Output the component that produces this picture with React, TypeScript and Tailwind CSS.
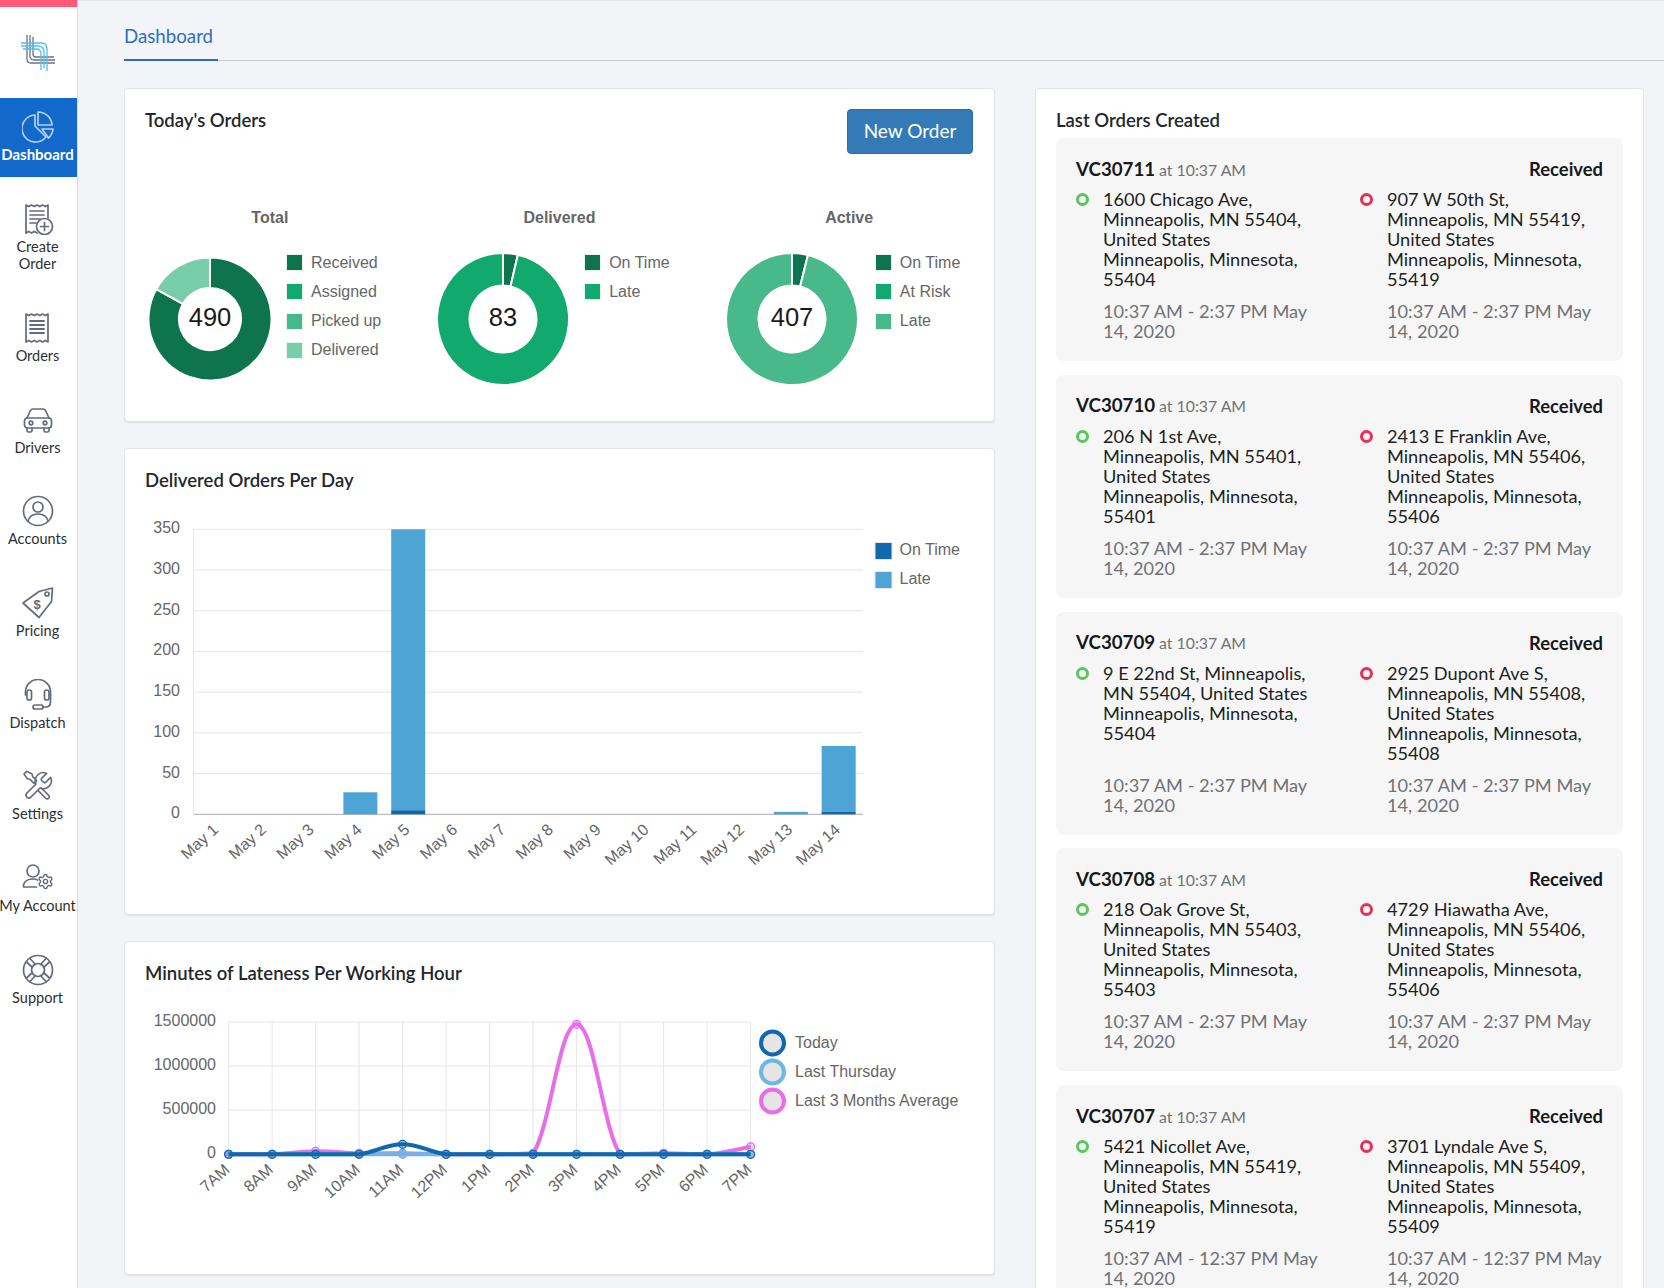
import { Settings } from 'lucide-react'
import type { ReactNode } from 'react'

const ink = '#666a7e'

function Icon({ children, stroke = ink }: { children: ReactNode; stroke?: string }) {
  return (
    <svg viewBox="0 0 32 32" className="w-8 h-8 shrink-0" fill="none" stroke={stroke} strokeWidth="1.7" strokeLinecap="round" strokeLinejoin="round">
      {children}
    </svg>
  )
}

const receipt = 'M4 30V2l2.75 1.6L9.5 2l2.75 1.6L15 2l2.75 1.6L20.5 2l2.75 1.6L26 2v'

const navItems: { label: ReactNode; active?: boolean; icon: ReactNode }[] = [
  {
    label: 'Dashboard',
    active: true,
    icon: (
      <Icon stroke="#b4d0f2">
        <path d="M13 4A13.5 13.5 0 1 0 24 26L13 15Z" />
        <path d="M16 1A14 14 0 0 1 30 14H16Z" />
        <path d="M20 18H31A14 14 0 0 1 26.5 27Z" />
      </Icon>
    ),
  },
  {
    label: (
      <>
        Create
        <br />
        Order
      </>
    ),
    icon: (
      <Icon>
        <path d="M4 30V2l2.75 1.6L9.5 2l2.75 1.6L15 2l2.75 1.6L20.5 2l2.75 1.6L26 2v13" />
        <path d="M4 30l2.75-1.6L9.5 30l2.75-1.6 2.75 1.6" />
        <path d="M8 8h14M8 12h14M8 16h10M8 20h6" />
        <circle cx="22.5" cy="23.5" r="8" />
        <path d="M22.5 19.5v8M18.5 23.5h8" />
      </Icon>
    ),
  },
  {
    label: 'Orders',
    icon: (
      <Icon>
        <path d={`${receipt}28l-2.75-1.6-2.75 1.6-2.75-1.6L15 30l-2.75-1.6L9.5 30l-2.75-1.6L4 30Z`} />
        <path d="M8 9h14M8 13h14M8 17h14M8 21h14" strokeWidth="1.8" />
      </Icon>
    ),
  },
  {
    label: 'Drivers',
    icon: (
      <Icon>
        <path d="M5 14 8 7.5Q8.8 5 11 5h10q2.2 0 3 2.5L27 14" />
        <rect x="2.5" y="14" width="27" height="10" rx="3" />
        <path d="M5 24v2.500q0 1.500 1.500 1.500h2q1.500 0 1.500-1.500V24M22 24v2.500q0 1.500 1.500 1.500h2q1.500 0 1.500-1.500V24" />
        <circle cx="9" cy="19" r="1.800" />
        <circle cx="23" cy="19" r="1.800" />
      </Icon>
    ),
  },
  {
    label: 'Accounts',
    icon: (
      <Icon>
        <circle cx="16" cy="16" r="14.500" />
        <circle cx="16" cy="12" r="5" />
        <path d="M6 26.500c1-5 5-7.500 10-7.500s9 2.500 10 7.500" />
      </Icon>
    ),
  },
  {
    label: 'Pricing',
    icon: (
      <Icon>
        <path d="M1 16 17 4.500 30.500 1l-1 13.500L17 30.500Z" />
        <circle cx="25" cy="7" r="2" />
        <text x="15" y="21.500" fontFamily="'Liberation Sans', sans-serif" fontWeight="700" fontSize="13" fill={ink} stroke="none" textAnchor="middle">$</text>
      </Icon>
    ),
  },
  {
    label: 'Dispatch',
    icon: (
      <Icon>
        <path d="M3.500 16v-3a12.500 12.500 0 0 1 25 0v3" />
        <rect x="5" y="11" width="4.500" height="10" rx="2" />
        <rect x="22.500" y="11" width="4.500" height="10" rx="2" />
        <path d="M28.500 16v7q0 5-5 5h-3" />
        <rect x="11" y="26" width="10" height="4" rx="2" />
      </Icon>
    ),
  },
  {
    label: 'Settings',
    icon: (
      <Icon>
        <g transform="scale(1.333)" strokeWidth="1.200">
          <path d="M14.700 6.300a1 1 0 0 0 0 1.400l1.600 1.600a1 1 0 0 0 1.400 0l3.770-3.770a6 6 0 0 1-7.940 7.940l-6.910 6.910a2.120 2.120 0 0 1-3-3l6.910-6.910a6 6 0 0 1 7.940-7.940l-3.760 3.760z" />
          <path d="M3.500 1 1.500 3 4 6.500l2 .5 3 3 2-2-3-3-.5-2ZM14.500 13.500l5.500 5.500q1 1 0 2.200-1.200 1-2.200 0L12.300 15.700" />
        </g>
      </Icon>
    ),
  },
  {
    label: 'My Account',
    icon: (
      <Icon>
        <circle cx="11" cy="9" r="6" />
        <path d="M14.500 25H2.500Q1 25 1.500 23q1.500-6 9.500-6 2.500 0 4.500 1" />
        <Settings x={15} y={11} width={17} height={17} stroke={ink} strokeWidth={2} />
      </Icon>
    ),
  },
  {
    label: 'Support',
    icon: (
      <Icon>
        <circle cx="16" cy="16" r="14.500" />
        <circle cx="16" cy="16" r="6.500" />
        <path d="M8 4.500l5.500 6M4.500 8l6 5.500M24 4.500l-5.500 6M27.500 8l-6 5.500M8 27.500l5.500-6M4.500 24l6-5.500M24 27.500l-5.500-6M27.500 24l-6-5.500" />
      </Icon>
    ),
  },
]

function Logo() {
  return (
    <svg viewBox="0 0 36 38" className="w-9 h-[38px]" fill="none" strokeWidth="1.300">
      <path d="M7 1v24q0 4 4 4h24M10 1v21q0 4 4 4h21M13 3v17q0 3 3 3h18" stroke="#6d7080" />
      <path d="M1 9h20q6 0 6 6v22M1 12h17q6 0 6 6v16M3 15h13q5 0 5 5v16" stroke="#52c0ec" />
    </svg>
  )
}

function Sidebar() {
  return (
    <aside className="w-[78px] shrink-0 bg-white border-r border-[#d8dae1] flex flex-col">
      <div className="h-[7px] bg-[#ff5a7c]" />
      <div className="h-[91px] flex items-center justify-center pr-[2px]">
        <Logo />
      </div>
      <nav className="flex flex-col gap-[13.200px]">
        {navItems.map((item, i) => (
          <div
            key={i}
            className={`pt-[13px] pb-[13px] pr-[2px] flex flex-col items-center text-center leading-[17.500px] whitespace-nowrap ${
              item.active ? 'bg-[#1268cb] text-white font-bold text-[15px]' : 'text-[#2c2f35] text-[14.500px]'
            }`}
          >
            {item.icon}
            <div className="mt-[3px]">{item.label}</div>
          </div>
        ))}
      </nav>
    </aside>
  )
}

function arc(cx: number, cy: number, r0: number, r1: number, from: number, to: number) {
  const pt = (r: number, deg: number) => {
    const a = ((deg - 90) * Math.PI) / 180
    return `${(cx + r * Math.cos(a)).toFixed(2)} ${(cy + r * Math.sin(a)).toFixed(2)}`
  }
  const large = to - from > 180 ? 1 : 0
  return `M${pt(r1, from)}A${r1} ${r1} 0 ${large} 1 ${pt(r1, to)}L${pt(r0, to)}A${r0} ${r0} 0 ${large} 0 ${pt(r0, from)}Z`
}

function Donut({ value, radius, inner, slices, marginLeft, legendGap, title, legend }: {
  value: string
  radius: number
  inner: number
  slices: [number, number, string][]
  marginLeft: string
  legendGap: string
  title: string
  legend: [string, string][]
}) {
  return (
    <div>
      <div className="mt-[1px] text-center font-['Liberation_Sans',sans-serif] font-bold text-[16px] leading-[20px] text-[#666]">{title}</div>
      <div className={`flex items-start mt-[23px] ${marginLeft}`}>
        <svg viewBox="0 0 136 136" className="w-[136px] h-[136px] shrink-0">
          {slices.map(([from, to, color]) => (
            <path key={from} d={arc(68, 68, inner, radius, from, to)} fill={color} stroke="#fff" strokeWidth="2" />
          ))}
          <text x="68" y="74.500" textAnchor="middle" fontFamily="'Liberation Sans', sans-serif" fontSize="25.500" fill="#1a1a1a">{value}</text>
        </svg>
        <div className={`flex flex-col gap-[12.300px] pt-[3px] ${legendGap}`}>
          {legend.map(([name, color]) => (
            <div key={name} className="flex items-center h-[17px] font-['Liberation_Sans',sans-serif] text-[16px] text-[#666] whitespace-nowrap">
              <span className="w-[17px] h-[17px] mr-[8px] border border-[#e6f4ee]" style={{ background: color }} />
              {name}
            </div>
          ))}
        </div>
      </div>
    </div>
  )
}

const axisText = { fontFamily: "'Liberation Sans', sans-serif", fontSize: 16, fill: '#666' }

function BarChart() {
  const left = 193.4
  const right = 863
  const bottom = 813.3
  const pxPerUnit = 285 / 350
  const step = (right - left) / 14
  const bars: [number, number, number][] = [
    [3, 0, 27],
    [4, 5, 345],
    [12, 0, 3],
    [13, 3, 81],
  ]
  return (
    <svg viewBox="125 500 869 400" className="block w-[869px] h-[400px] mt-[10px]">
      {[0, 50, 100, 150, 200, 250, 300, 350].map((v) => {
        const y = bottom - v * pxPerUnit
        return (
          <g key={v}>
            <line x1={left} x2={right} y1={y} y2={y} stroke={v === 0 ? '#aaa' : '#e6e6e6'} />
            <text x="180" y={y + 4} textAnchor="end" {...axisText}>{v}</text>
          </g>
        )
      })}
      <line x1={left} x2={left} y1={528} y2={bottom} stroke="#e6e6e6" />
      {bars.map(([i, onTime, late]) => {
        const x = left + i * step + 6.500
        const h1 = onTime * pxPerUnit
        const h2 = late * pxPerUnit
        return (
          <g key={i}>
            <rect x={x} y={bottom - h1 - h2} width="34" height={h2} fill="#4ea4d5" />
            <rect x={x} y={bottom - h1} width="34" height={h1} fill="#1168ae" />
          </g>
        )
      })}
      {Array.from({ length: 14 }, (_, i) => {
        const x = left + (i + 0.5) * step + 2
        return (
          <text key={i} x={x} y={830} textAnchor="end" transform={`rotate(-42 ${x} 830)`} {...axisText}>
            May {i + 1}
          </text>
        )
      })}
      <rect x="875" y="541.500" width="17" height="17" fill="#1168ae" stroke="#e3e6ea" />
      <text x="899.500" y="553.500" {...axisText}>On Time</text>
      <rect x="875" y="570.500" width="17" height="17" fill="#4ea4d5" stroke="#e3e6ea" />
      <text x="899.500" y="582.500" {...axisText}>Late</text>
    </svg>
  )
}

// same spline chart.js draws with tension 0.4
function spline(pts: [number, number][]) {
  const t = 0.4
  let d = `M${pts[0][0]} ${pts[0][1]}`
  for (let i = 0; i < pts.length - 1; i++) {
    const p0 = pts[Math.max(i - 1, 0)]
    const p1 = pts[i]
    const p2 = pts[i + 1]
    const p3 = pts[Math.min(i + 2, pts.length - 1)]
    const c1 = [p1[0] + ((p2[0] - p0[0]) * t) / 2, p1[1] + ((p2[1] - p0[1]) * t) / 2]
    const c2 = [p2[0] - ((p3[0] - p1[0]) * t) / 2, p2[1] - ((p3[1] - p1[1]) * t) / 2]
    d += `C${c1[0]} ${Math.min(c1[1], 1153.3)} ${c2[0]} ${Math.min(c2[1], 1153.3)} ${p2[0]} ${p2[1]}`
  }
  return d
}

function LineChart() {
  const left = 228.6
  const right = 750.6
  const zero = 1153.3
  const top = 1021
  const step = (right - left) / 12
  const hours = ['7AM', '8AM', '9AM', '10AM', '11AM', '12PM', '1PM', '2PM', '3PM', '4PM', '5PM', '6PM', '7PM']
  const avg = [0, 0, 3, 1, 1, 0, 0, 1, 130, 0, 1, 0, 7.500]
  const last = [0, 0, 0, 0, 0, 0, 0, 0, 0, 0, 0, 0, 0]
  const today = [0, 0, 0, 0, 10, 0, 0, 0, 0, 0, 0, 0, 0]
  const series: [number[], string][] = [
    [avg, '#e96ce9'],
    [last, '#6cb8e2'],
    [today, '#1168ae'],
  ]
  return (
    <svg viewBox="125 990 869 220" className="block w-[869px] h-[220px] mt-[7px]">
      {[0, 500000, 1000000, 1500000].map((v) => {
        const y = zero - (v / 1500000) * (zero - top)
        return (
          <g key={v}>
            <line x1={left} x2={right} y1={y} y2={y} stroke="#e6e6e6" />
            <text x="216" y={y + 4} textAnchor="end" {...axisText}>{v}</text>
          </g>
        )
      })}
      {hours.map((h, i) => {
        const x = left + i * step
        return (
          <g key={h}>
            <line x1={x} x2={x} y1={top} y2={zero} stroke="#e6e6e6" />
            <text x={x + 2} y={1170} textAnchor="end" transform={`rotate(-42 ${x + 2} 1170)`} {...axisText}>{h}</text>
          </g>
        )
      })}
      {series.map(([vals, color]) => {
        const pts = vals.map((v, i) => [left + i * step, zero - v] as [number, number])
        return (
          <g key={color}>
            <path d={spline(pts)} fill="none" stroke={color} strokeWidth="4" />
            {pts.map(([x, y]) => (
              <circle key={x} cx={x} cy={y} r="4" fill={`${color}55`} stroke={color} strokeWidth="1.200" />
            ))}
          </g>
        )
      })}
      {(
        [
          ['Today', '#1168ae', 1042],
          ['Last Thursday', '#6cb8e2', 1071],
          ['Last 3 Months Average', '#e96ce9', 1100],
        ] as [string, string, number][]
      ).map(([name, color, y]) => (
        <g key={name}>
          <circle cx="772.500" cy={y} r="11.500" fill="#e5e5e5" stroke={color} strokeWidth="4" />
          <text x="795" y={y + 5} {...axisText}>{name}</text>
        </g>
      ))}
    </svg>
  )
}

interface Stop {
  street: string
  zip: string
}

interface Order {
  id: string
  pickup: Stop
  dropoff: Stop
  window: string
}

const orders: Order[] = [
  { id: 'VC30711', pickup: { street: '1600 Chicago Ave', zip: '55404' }, dropoff: { street: '907 W 50th St', zip: '55419' }, window: '2:37 PM' },
  { id: 'VC30710', pickup: { street: '206 N 1st Ave', zip: '55401' }, dropoff: { street: '2413 E Franklin Ave', zip: '55406' }, window: '2:37 PM' },
  { id: 'VC30709', pickup: { street: '9 E 22nd St', zip: '55404' }, dropoff: { street: '2925 Dupont Ave S', zip: '55408' }, window: '2:37 PM' },
  { id: 'VC30708', pickup: { street: '218 Oak Grove St', zip: '55403' }, dropoff: { street: '4729 Hiawatha Ave', zip: '55406' }, window: '2:37 PM' },
  { id: 'VC30707', pickup: { street: '5421 Nicollet Ave', zip: '55419' }, dropoff: { street: '3701 Lyndale Ave S', zip: '55409' }, window: '12:37 PM' },
]

function StopColumn({ stop, window, ring }: { stop: Stop; window: string; ring: string }) {
  return (
    <div className="flex">
      <span className={`w-[13px] h-[13px] mt-[4px] rounded-full border-[3px] shrink-0 ${ring}`} />
      <div className="ml-[14px] w-[217px] flex flex-col">
        <div className="text-[#1d1f22]">
          {stop.street}, Minneapolis, MN {stop.zip}, United States
          <br />
          Minneapolis, Minnesota, {stop.zip}
        </div>
        <div className="mt-auto pt-[12px] text-[#6f7275]">10:37 AM - {window} May 14, 2020</div>
      </div>
    </div>
  )
}

function OrderCard({ order }: { order: Order }) {
  return (
    <div className="bg-[#f6f6f7] rounded-[8px] px-[20px] pt-[20px] pb-[18px] min-h-[223px]">
      <div className="flex justify-between items-center h-[22px] mb-[9px]">
        <div>
          <span className="font-bold text-[#17181a] text-[18.700px]">{order.id}</span>
          <span className="text-[15.800px] text-[#6f7275] ml-[4px]">at 10:37 AM</span>
        </div>
        <span className="font-bold text-[#17181a] text-[18.400px]">Received</span>
      </div>
      <div className="grid grid-cols-[284px_1fr]">
        <StopColumn stop={order.pickup} window={order.window} ring="border-[#5cc45c]" />
        <StopColumn stop={order.dropoff} window={order.window} ring="border-[#ea2e58]" />
      </div>
    </div>
  )
}

const cardClass = 'bg-white border border-[#e2e4e9] rounded-[4px] shadow-[0_1px_1px_rgba(0,0,0,0.08)]'
const titleClass = 'text-[18.500px] leading-[22px] font-semibold text-[#24272b]'

export default function App() {
  return (
    <div className="flex h-[1288px] overflow-hidden bg-[#f2f4f8] font-['Lato',sans-serif]">
      <Sidebar />
      <main className="flex-1 min-w-0 pl-[46px] border-t border-[#e3e5ea]">
        <div className="h-[60px] border-b border-[#c9cbd0] flex items-end">
          <div className="w-[94px] h-[60px] -mb-px pb-[12px] flex items-end border-b-2 border-[#2b6db8] text-[18.700px] leading-[22px] text-[#2f6fbf]">
            Dashboard
          </div>
        </div>
        <div className="flex gap-[40px] pt-[27px]">
          <div className="w-[871px] shrink-0 flex flex-col gap-[26.500px]">
            <section className={`${cardClass} h-[333.500px]`}>
              <div className="flex justify-between items-start pl-[20px] pr-[21px] pt-[20px]">
                <h2 className={titleClass}>Today's Orders</h2>
                <button className="w-[126px] h-[45px] bg-[#337ab7] border border-[#2e6da4] rounded-[4px] text-white text-[19px]">New Order</button>
              </div>
              <div className="grid grid-cols-3 mt-[53px]">
                <Donut
                  title="Total"
                  value="490"
                  radius={61.500}
                  inner={31}
                  marginLeft="ml-[16.500px]"
                  legendGap="ml-[8.500px]"
                  slices={[
                    [0, 299, '#0e744e'],
                    [299, 360, '#78cdaa'],
                  ]}
                  legend={[
                    ['Received', '#0e744e'],
                    ['Assigned', '#12a96f'],
                    ['Picked up', '#47b98b'],
                    ['Delivered', '#78cdaa'],
                  ]}
                />
                <Donut
                  title="Delivered"
                  value="83"
                  radius={66}
                  inner={33.500}
                  marginLeft="ml-[20px]"
                  legendGap="ml-[13.500px]"
                  slices={[
                    [0, 13, '#0e744e'],
                    [13, 360, '#12a96f'],
                  ]}
                  legend={[
                    ['On Time', '#0e744e'],
                    ['Late', '#12a96f'],
                  ]}
                />
                <Donut
                  title="Active"
                  value="407"
                  radius={66}
                  inner={33.500}
                  marginLeft="ml-[19.500px]"
                  legendGap="ml-[15px]"
                  slices={[
                    [0, 14, '#0e744e'],
                    [14, 360, '#47b98b'],
                  ]}
                  legend={[
                    ['On Time', '#0e744e'],
                    ['At Risk', '#12a96f'],
                    ['Late', '#47b98b'],
                  ]}
                />
              </div>
            </section>
            <section className={`${cardClass} h-[466.500px]`}>
              <h2 className={`${titleClass} px-[20px] pt-[20px]`}>Delivered Orders Per Day</h2>
              <BarChart />
            </section>
            <section className={`${cardClass} h-[333.500px]`}>
              <h2 className={`${titleClass} px-[20px] pt-[20px]`}>Minutes of Lateness Per Working Hour</h2>
              <LineChart />
            </section>
          </div>
          <section className={`${cardClass} w-[609px] shrink-0 h-[1400px] px-[20px] pt-[20px]`}>
            <h2 className={`${titleClass} mb-[7px]`}>Last Orders Created</h2>
            <div className="flex flex-col gap-[13.800px] text-[18.200px] leading-[20px]">
              {orders.map((order) => (
                <OrderCard key={order.id} order={order} />
              ))}
            </div>
          </section>
        </div>
      </main>
    </div>
  )
}
